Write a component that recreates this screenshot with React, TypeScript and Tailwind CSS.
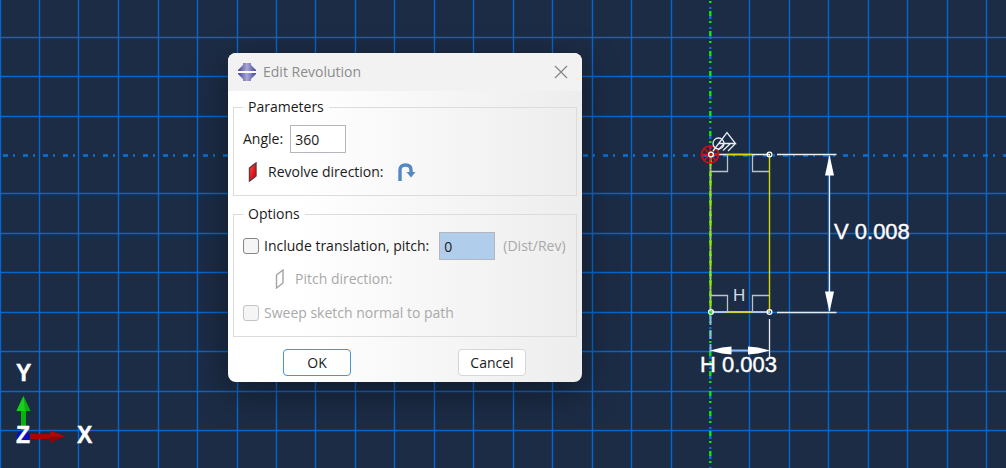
import React from 'react'

const columns = [0, 39, 78, 118, 158, 197, 237, 276, 315, 355, 394, 434, 473, 513, 552, 592, 631, 671, 749, 789, 828, 868, 907, 947, 986]
const rows = [37, 76, 116, 193, 233, 272, 312, 351, 391, 430]

// Keep the grid going on windows wider or taller than the base sheet
for (let i = 26; i < 80; i++) columns.push(Math.round(i * 39.44))
for (let i = 8; i < 50; i++) rows.push(Math.round(155.4 + i * 39.3))

function Grid() {
  return (
    <g stroke="#0666cd" strokeWidth="1.4">
      {columns.map((x) => (
        <line key={`c${x}`} x1={x + 0.5} y1="0" x2={x + 0.5} y2="100%" />
      ))}
      {rows.map((y) => (
        <line key={`r${y}`} x1="0" y1={y + 0.5} x2="100%" y2={y + 0.5} />
      ))}
    </g>
  )
}

function Axes() {
  return (
    <g strokeWidth="2.4">
      <line x1="3" y1="155.5" x2="100%" y2="155.5" stroke="#0872dc" strokeDasharray="5 5 2 8" />
      <line x1="710.3" y1="-4" x2="710.3" y2="100%" stroke="#0872dc" strokeDasharray="3 8 2 7" />
      <line x1="710.3" y1="-9" x2="710.3" y2="100%" stroke="#00ee10" strokeDasharray="5 5 2 8" />
    </g>
  )
}

function Sketch() {
  return (
    <g fill="none" stroke="#e8edf2" strokeWidth="1.3">
      {/* profile */}
      <path d="M711 154.500H770M711 312H770" />
      <path d="M727 154.500H752M727 312H752M769.500 155V312" stroke="#d6d800" strokeWidth="1.400" />
      <path d="M710.500 155V312" stroke="#b4c840" strokeWidth="1.800" />
      <path d="M710.500 160V312" stroke="#7cf000" strokeWidth="2" strokeDasharray="6 8 2 4" />
      <path d="M710.500 316V352" stroke="#8bb4e8" strokeWidth="2" strokeDasharray="9 5" />

      {/* perpendicular marks */}
      <g stroke="#b9c1cc">
        <path d="M711 171.500H727.500V155M769 171.500H752.500V155" />
        <path d="M711 295.500H727.500V312M769 295.500H752.500V312" />
      </g>

      {/* fixed point */}
      <g stroke="#e00a12" strokeWidth="1.600">
        <circle cx="710" cy="154.500" r="8.500" />
        <path d="M701 154.500H719M710 145.500V163.500M703.500 148L716.500 161M716.500 148L703.500 161" />
      </g>
      <circle cx="718.500" cy="143.500" r="5.500" />
      <path d="M713 151L727 132.500L735.500 143.500H719M724 144L718 150M730 144L723 150.500M735 144L728 151" />

      {/* vertices */}
      <g strokeWidth="1.300" stroke="#fff">
        <circle cx="711" cy="154.500" r="2.400" />
        <circle cx="769.500" cy="154.500" r="2.400" />
        <circle cx="711" cy="312" r="2.400" />
        <circle cx="769.500" cy="312" r="2.400" />
      </g>
      <circle cx="710.500" cy="312.500" r="1.300" fill="#00ee10" stroke="none" />

      {/* dimensions */}
      <path d="M777 154.500H836.500M777 312.500H836.500M829.500 156V311" />
      <path d="M769.500 319V359" />
      <path d="M731 350.500H748" stroke="#8bb4e8" strokeWidth="2" />
      <g fill="#fff" stroke="none">
        <path d="M829.500 155L834 175.500H825Z" />
        <path d="M829.500 312L825 291.500H834Z" />
        <path d="M710 350.500L722 347.500L731.500 346.500V354.500L722 353.500Z" />
        <path d="M770 350.500L758 347.500L748 346.500V354.500L758 353.500Z" />
      </g>
      <g fill="#fff" className="font-['Liberation_Sans',sans-serif]">
        <g stroke="#fff" strokeWidth="0.4" className="text-[22px]">
          <text x="834" y="239">V 0.008</text>
          <text x="700" y="372">H 0.003</text>
        </g>
        <text x="733" y="301" fill="#d5dae0" stroke="none" className="text-[17px]">H</text>
      </g>
    </g>
  )
}

function Triad() {
  return (
    <g>
      <circle cx="23" cy="437" r="6.500" fill="#0a0ac8" />
      <rect x="21" y="408" width="5" height="22" fill="#08b010" />
      <path d="M23.500 396L30.500 411H16.500Z" fill="#0fae14" />
      <path d="M23.500 396L25 411H16.500Z" fill="#17cf1c" />
      <rect x="30" y="434" width="22" height="5" fill="#a80606" />
      <path d="M65 436.500L50 443V430.500Z" fill="#8f0505" />
      <path d="M65 436.500L50 437V430.500Z" fill="#b00808" />
      <g fill="#fff" stroke="#fff" strokeWidth="0.4" className="font-['Liberation_Sans',sans-serif] text-[23px] font-bold">
        <text x="16" y="381">Y</text>
        <text x="16" y="443">Z</text>
        <text x="77" y="443">X</text>
      </g>
    </g>
  )
}

function RevolveIcon() {
  return (
    <svg width="18" height="18" viewBox="0 0 18 18" aria-hidden="true">
      <defs>
        <linearGradient id="revolve" x1="0" x2="1" y1="0" y2="0">
          <stop offset="0" stopColor="#46439a" />
          <stop offset="0.5" stopColor="#aaa8d6" />
          <stop offset="1" stopColor="#46439a" />
        </linearGradient>
      </defs>
      <path d="M5 0H13V2L18 7V8H0V7L5 2Z" fill="url(#revolve)" />
      <path d="M0 10H18V11L13 16V18H5V16L0 11Z" fill="url(#revolve)" />
      <rect y="8" width="18" height="2" fill="#fff" />
    </svg>
  )
}

function PlaneIcon({ active }: { active?: boolean }) {
  return (
    <svg width="10" height="20" viewBox="0 0 10 20" aria-hidden="true">
      <defs>
        <linearGradient id="plane" x1="0" x2="1" y1="0" y2="1">
          <stop offset="0" stopColor="#ff5a5a" />
          <stop offset="0.6" stopColor="#f00c14" />
        </linearGradient>
      </defs>
      <path
        d="M1.500 6L8 1V14L1.500 19Z"
        fill={active ? 'url(#plane)' : 'none'}
        stroke={active ? '#5c3a3a' : '#a3a3a3'}
        strokeWidth="1.400"
      />
    </svg>
  )
}

function FlipIcon() {
  return (
    <svg width="18" height="18" viewBox="0 0 18 18" aria-hidden="true">
      <path d="M2 18V7Q2 2 7.500 2Q13 2 13 7V10" fill="none" stroke="#5488c2" strokeWidth="3.400" />
      <path d="M8.500 9H17.500L13 14.500Z" fill="#5488c2" />
    </svg>
  )
}

const fieldset = 'border border-[#dcdcdc] pl-[9px] pt-2 pb-3'
const legend = 'h-5 px-[5px] leading-5'
const textBox = 'h-7 w-14 border border-[#b5b5bd] px-1 outline-none'
const checkbox = 'size-4 shrink-0 appearance-none rounded-[3px] border bg-[#f5f5f5]'

function EditRevolution() {
  return (
    <section
      role="dialog"
      aria-labelledby="dialog-title"
      className="absolute left-[228px] top-[53px] w-[354px] overflow-hidden rounded-lg bg-linear-to-r from-white from-20% to-[#ededed] font-['Open_Sans',sans-serif] text-sm text-[#1a1a1a] shadow-[0_10px_36px_rgba(0,0,0,0.4)]"
    >
      <header className="flex h-[38px] items-center bg-[#f2f2f2] pl-2.5 pr-3.5">
        <RevolveIcon />
        <h1 id="dialog-title" className="ml-[7px] text-[#8c8c8c]">
          Edit Revolution
        </h1>
        <button type="button" aria-label="Close" className="ml-auto">
          <svg width="14" height="14" viewBox="0 0 14 14" fill="none" stroke="#858585" strokeWidth="1.200">
            <path d="M1 1L13 13M13 1L1 13" />
          </svg>
        </button>
      </header>

      <form className="px-[5px] py-1.5" onSubmit={(e) => e.preventDefault()}>
        <fieldset className={fieldset}>
          <legend className={legend}>Parameters</legend>
          <div className="flex items-center gap-[7px]">
            <label htmlFor="angle">Angle:</label>
            <input id="angle" defaultValue="360" className={`${textBox} bg-white`} />
          </div>
          <div className="mt-2 flex h-[22px] items-center pl-[5px]">
            <PlaneIcon active />
            <span className="ml-2.5">Revolve direction:</span>
            <button type="button" aria-label="Flip revolve direction" className="ml-3.5">
              <FlipIcon />
            </button>
          </div>
        </fieldset>

        <fieldset className={`${fieldset} mt-2`}>
          <legend className={legend}>Options</legend>
          <div className="flex items-center">
            <input id="translation" type="checkbox" className={`${checkbox} border-[#868686]`} />
            <label htmlFor="translation" className="ml-[5px]">
              Include translation, pitch:
            </label>
            <input
              aria-label="Pitch"
              defaultValue="0"
              className={`${textBox} ml-2.5 bg-[#b1cdec]`}
            />
            <span className="ml-2 text-[#a9a9a9]">(Dist/Rev)</span>
          </div>
          <div className="mt-2 flex h-[22px] items-center pl-8 text-[#a9a9a9]">
            <PlaneIcon />
            <span className="ml-2.5">Pitch direction:</span>
          </div>
          <div className="mt-3 flex h-[22px] items-center text-[#a9a9a9]">
            <input id="sweep" type="checkbox" disabled className={`${checkbox} border-[#c4c4c4]`} />
            <label htmlFor="sweep" className="ml-[5px]">
              Sweep sketch normal to path
            </label>
          </div>
        </fieldset>

        <div className="mt-3 flex justify-between pl-[50px] pr-[51px]">
          <button type="submit" className="h-[27px] w-[68px] rounded border border-[#4596d8] bg-white">
            OK
          </button>
          <button type="button" className="h-[27px] w-[68px] rounded border border-[#d6d6d6] bg-white">
            Cancel
          </button>
        </div>
      </form>
    </section>
  )
}

export default function App() {
  return (
    <main className="relative min-h-screen overflow-hidden bg-[#1c2c45]">
      <svg className="absolute inset-0 h-full w-full" role="img" aria-label="Sketch viewport">
        <Grid />
        <Axes />
        <Sketch />
        <Triad />
      </svg>
      <EditRevolution />
    </main>
  )
}
